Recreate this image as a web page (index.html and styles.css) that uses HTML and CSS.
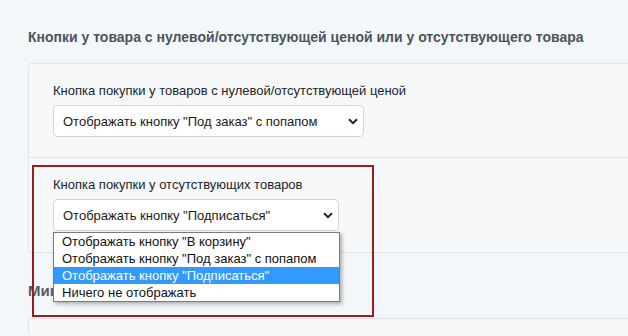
FILE: index.html
```html
<!DOCTYPE html>
<html lang="ru">
<head>
    <meta charset="UTF-8">
    <meta name="viewport" content="width=device-width, initial-scale=1.0">
    <title>Настройки кнопок</title>
    <link rel="stylesheet" href="styles.css">
</head>
<body>
    <div class="page">
        <h3 class="section-title">Кнопки у товара с нулевой/отсутствующей ценой или у отсутствующего товара</h3>
        <div class="card">
            <div class="card-row">
                <label class="field-label">Кнопка покупки у товаров с нулевой/отсутствующей ценой</label>
                <div class="select select-wide">
                    <span>Отображать кнопку "Под заказ" с попапом</span>
                    <svg class="chevron" width="10" height="7" viewBox="0 0 10 7"><path d="M1 1.2 L5 5.2 L9 1.2" fill="none" stroke="#222" stroke-width="2"/></svg>
                </div>
            </div>
            <div class="card-row card-row-last">
                <label class="field-label">Кнопка покупки у отсутствующих товаров</label>
                <div class="select-wrap">
                    <div class="select select-narrow">
                        <span>Отображать кнопку "Подписаться"</span>
                        <svg class="chevron" width="10" height="7" viewBox="0 0 10 7"><path d="M1 1.2 L5 5.2 L9 1.2" fill="none" stroke="#222" stroke-width="2"/></svg>
                    </div>
                    <ul class="dropdown">
                        <li>Отображать кнопку "В корзину"</li>
                        <li>Отображать кнопку "Под заказ" с попапом</li>
                        <li class="active">Отображать кнопку "Подписаться"</li>
                        <li>Ничего не отображать</li>
                    </ul>
                </div>
            </div>
        </div>
        <h3 class="section-title section-title-next">Минимальная сумма</h3>
        <div class="card card-next"></div>
        <div class="highlight-box"></div>
    </div>
</body>
</html>
```

FILE: styles.css
```css
body {
    margin: 0;
    background: #f4f7f9;
    font-family: "Liberation Sans", Arial, sans-serif;
    color: #212529;
    overflow: hidden;
}
.page {
    position: relative;
    padding: 29px 0 0 28px;
}
.section-title {
    margin: 0;
    font-size: 14px;
    line-height: 16px;
    font-weight: bold;
    color: #4b545c;
}
.section-title-next {
    margin-top: 30px;
    font-size: 15px;
    color: #555b61;
}
.card {
    margin-top: 18px;
    background: #f6f8fa;
    border: 1px solid #dfe4e8;
    border-right: none;
    border-radius: 4px 0 0 4px;
}
.card-next {
    margin-top: 19px;
    height: 16px;
    border-bottom: none;
}
.card-row {
    padding: 19px 0 20px 24px;
    border-bottom: 1px solid #dfe4e8;
}
.card-row-last {
    border-bottom: none;
    padding-bottom: 21px;
}
.field-label {
    display: block;
    font-size: 13px;
    line-height: 15px;
    margin-bottom: 7px;
}
.select-wrap {
    position: relative;
}
.select {
    display: flex;
    justify-content: space-between;
    align-items: center;
    box-sizing: border-box;
    height: 32px;
    padding: 0 5px 0 9px;
    background: #fff;
    border: 1px solid #cfd6dc;
    border-radius: 4px;
    font-size: 13px;
    color: #1a1a1a;
}
.select-wide {
    width: 311px;
}
.select-narrow {
    width: 286px;
}
.chevron {
    flex: none;
}
.dropdown {
    position: absolute;
    top: 33px;
    left: 0;
    width: 287px;
    box-sizing: border-box;
    margin: 0;
    padding: 0;
    list-style: none;
    background: #fff;
    border: 1px solid #7a7a7a;
    box-shadow: 2px 2px 4px rgba(0, 0, 0, 0.3);
    font-size: 13px;
    color: #111;
}
.dropdown li {
    height: 17px;
    line-height: 17px;
    padding-left: 8px;
}
.dropdown li.active {
    background: #3399ff;
    color: #fff;
}
.highlight-box {
    position: absolute;
    left: 32px;
    top: 165px;
    width: 342px;
    height: 152px;
    box-sizing: border-box;
    border: 2px solid #9b1c1c;
}
```
